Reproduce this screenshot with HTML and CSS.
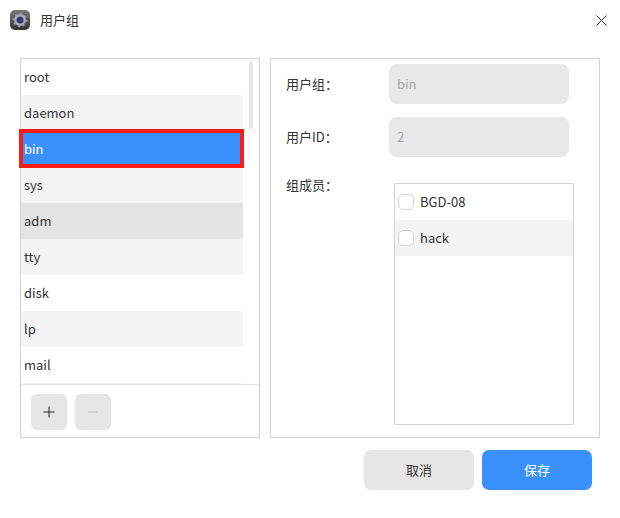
FILE: index.html
```html
<!DOCTYPE html>
<html lang="zh-CN">
<head>
    <meta charset="UTF-8">
    <meta name="viewport" content="width=device-width, initial-scale=1.0">
    <title>用户组</title>
    <link rel="stylesheet" href="styles.css">
</head>
<body>
    <div class="dialog">
        <div class="titlebar">
            <div class="title">
                <svg class="app-icon" width="20" height="20" viewBox="0 0 20 20">
                    <defs>
                        <linearGradient id="iconBg" x1="0" y1="0" x2="0" y2="1">
                            <stop offset="0" stop-color="#7a7a7a"/>
                            <stop offset="1" stop-color="#333"/>
                        </linearGradient>
                    </defs>
                    <rect width="20" height="20" rx="5" fill="url(#iconBg)"/>
                    <circle cx="10" cy="10" r="4.8" fill="none" stroke="#a9acb4" stroke-width="2.4"/>
                    <circle cx="10" cy="10" r="6.6" fill="none" stroke="#9a9da5" stroke-width="1.6" stroke-dasharray="2 3.18"/>
                    <circle cx="10" cy="10" r="3" fill="#2b2a8c"/>
                    <circle cx="10" cy="10" r="1.3" fill="#4a4a60"/>
                </svg>
                <span class="title-text">用户组</span>
            </div>
            <button class="close-btn" type="button" aria-label="关闭">
                <svg width="11" height="11" viewBox="0 0 11 11">
                    <path d="M0.5 0.5L10.5 10.5M10.5 0.5L0.5 10.5" stroke="#333" stroke-width="1" fill="none"/>
                </svg>
            </button>
        </div>

        <div class="main">
            <div class="panel group-panel">
                <div class="group-list">
                    <div class="row">root</div>
                    <div class="row alt">daemon</div>
                    <div class="row selected">bin</div>
                    <div class="row alt">sys</div>
                    <div class="row hover">adm</div>
                    <div class="row alt">tty</div>
                    <div class="row">disk</div>
                    <div class="row alt">lp</div>
                    <div class="row">mail</div>
                    <div class="row alt"></div>
                </div>
                <div class="scroll-thumb"></div>
                <div class="red-mark"></div>
                <div class="list-tools">
                    <button class="tool-btn" type="button">
                        <svg width="12" height="12" viewBox="0 0 12 12"><path d="M6 0.5V11.5M0.5 6H11.5" stroke="#222" stroke-width="1" fill="none"/></svg>
                    </button>
                    <button class="tool-btn" type="button">
                        <svg width="12" height="12" viewBox="0 0 12 12"><path d="M1 6H11" stroke="#b4b4b4" stroke-width="1" fill="none"/></svg>
                    </button>
                </div>
            </div>

            <div class="panel detail-panel">
                <div class="field">
                    <label class="field-label">用户组：</label>
                    <div class="field-value">bin</div>
                </div>
                <div class="field">
                    <label class="field-label">用户ID：</label>
                    <div class="field-value">2</div>
                </div>
                <div class="field members">
                    <label class="field-label">组成员：</label>
                    <div class="member-list">
                        <div class="member"><span class="check"></span>BGD-08</div>
                        <div class="member alt"><span class="check"></span>hack</div>
                    </div>
                </div>
            </div>
        </div>

        <div class="actions">
            <button class="action-btn" type="button">取消</button>
            <button class="action-btn primary" type="button">保存</button>
        </div>
    </div>
</body>
</html>
```

FILE: styles.css
```css
* {
    box-sizing: border-box;
}
html, body {
    height: 100%;
}
body {
    margin: 0;
    background-color: #fff;
    color: #333;
    font-family: "Noto Sans CJK SC", "Noto Sans", sans-serif;
    font-size: 13px;
}
button {
    font-family: inherit;
    border: none;
    padding: 0;
}
.dialog {
    width: 620px;
    height: 518px;
    padding: 0 20px;
}
.titlebar {
    display: flex;
    align-items: center;
    justify-content: space-between;
    height: 40px;
    margin: 0 -20px 18px;
    padding: 0 13px 0 10px;
}
.title {
    display: flex;
    align-items: center;
    gap: 10px;
}
.title-text {
    margin-top: -2px;
}
.close-btn {
    display: flex;
    background: none;
}
.main {
    display: flex;
    gap: 10px;
    height: 380px;
}
.panel {
    border: 1px solid #d2d2d2;
}
.group-panel {
    position: relative;
    display: flex;
    flex-direction: column;
    width: 240px;
}
.group-list {
    flex-shrink: 0;
    height: 326px;
    overflow: hidden;
    border-bottom: 1px solid #e4e4e4;
    padding-right: 16px;
}
.row {
    display: flex;
    align-items: center;
    height: 36px;
    padding: 0 0 2px 3px;
}
.row.alt {
    background-color: #f4f4f4;
}
.row.hover {
    background-color: #e4e4e4;
}
.row.selected {
    background-color: #3a91fd;
    color: #fff;
}
.scroll-thumb {
    position: absolute;
    top: 2px;
    left: 228px;
    width: 4px;
    height: 68px;
    border-radius: 2px;
    background-color: #e6e6e6;
}
.red-mark {
    position: absolute;
    top: 70px;
    left: -2px;
    width: 225px;
    height: 39px;
    border: 4px solid #fc1c14;
}
.list-tools {
    display: flex;
    gap: 8px;
    padding: 9px 10px 0;
}
.tool-btn {
    display: flex;
    align-items: center;
    justify-content: center;
    width: 36px;
    height: 36px;
    border-radius: 6px;
    background-color: #e6e6e6;
}
.detail-panel {
    width: 330px;
    padding: 5px 0 0 15px;
}
.field {
    display: flex;
    height: 40px;
    margin-bottom: 13px;
}
.field-label {
    width: 103px;
    line-height: 39px;
}
.field-value {
    width: 180px;
    border-radius: 8px;
    padding: 0 0 0 8px;
    line-height: 40px;
    background-color: #e8e8e8;
    color: #a8a8a8;
}
.members {
    height: auto;
    margin: 0;
}
.members .field-label {
    width: 108px;
    line-height: 18px;
    margin-top: 6px;
}
.member-list {
    width: 180px;
    height: 242px;
    margin-top: 13px;
    border: 1px solid #d2d2d2;
}
.member {
    display: flex;
    align-items: center;
    gap: 6px;
    height: 36px;
    padding: 0 0 2px 3px;
}
.member.alt {
    background-color: #f4f4f4;
}
.check {
    width: 16px;
    height: 16px;
    margin-top: 2px;
    border: 1.5px solid #d4d4d4;
    border-radius: 5px;
    background-color: #fff;
}
.actions {
    display: flex;
    justify-content: flex-end;
    gap: 8px;
    margin: 12px 8px 0 0;
}
.action-btn {
    width: 110px;
    height: 40px;
    border-radius: 7px;
    padding-bottom: 2px;
    background-color: #e6e6e6;
    color: #333;
    font-size: 13px;
}
.action-btn.primary {
    background-color: #3a91fd;
    color: #fff;
}
```
